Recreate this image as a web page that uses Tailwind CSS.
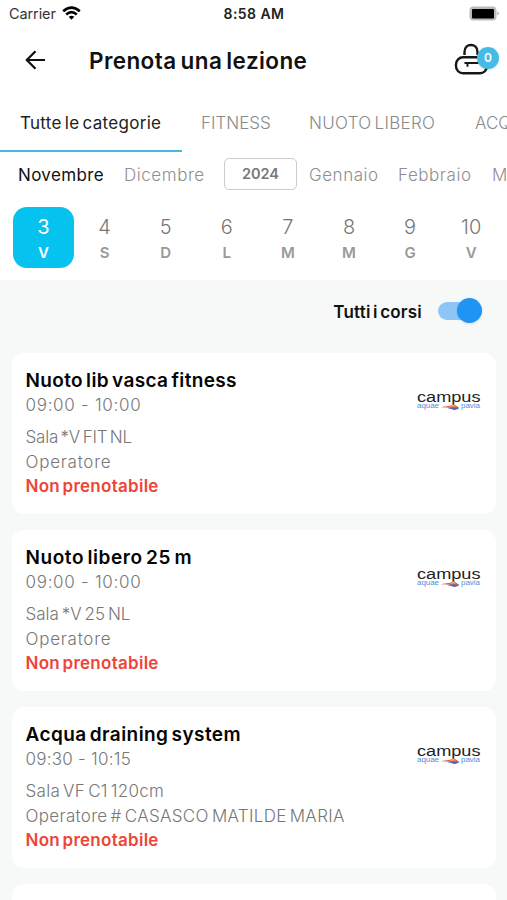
<!DOCTYPE html>
<html lang="it">
<head>
<meta charset="utf-8">
<title>Prenota una lezione</title>
<script src="https://cdn.jsdelivr.net/npm/@tailwindcss/browser@4"></script>
</head>
<body class="bg-[#f7f9f9]">
<svg class="hidden">
  <symbol id="campus" viewBox="0 0 66 24">
    <text x="1" y="12" font-family="Liberation Sans, sans-serif" font-size="15.500" fill="#222" textLength="63.500" lengthAdjust="spacingAndGlyphs">campus</text>
    <text x="1" y="18.300" font-family="Liberation Sans, sans-serif" font-size="6.500" fill="#4a90d9" textLength="22" lengthAdjust="spacingAndGlyphs">aquae</text>
    <text x="45" y="18.300" font-family="Liberation Sans, sans-serif" font-size="6.500" fill="#4a90d9" textLength="19" lengthAdjust="spacingAndGlyphs">pavia</text>
    <path d="M25 17.200C31 15.500 34 16.500 38 14.200L43.500 18Z" fill="#e4573d"/>
    <path d="M33 17L38 14.200L40 16.500Z" fill="#f0a070"/>
    <path d="M31 18Q37 16.500 43.500 18Q39 21 36 19.300Z" fill="#5a62b5"/>
  </symbol>
</svg>
<div class="flex h-[900px] w-[507px] flex-col overflow-hidden whitespace-nowrap bg-[#f7f9f9] font-['Inter',sans-serif]">
  <header class="shrink-0 bg-white">
    <div class="grid h-7 grid-cols-3 items-center pl-[9px] pr-[7px] text-[14.500px] leading-none text-black">
      <div class="flex items-center gap-[6px] text-[#333]"><span class="tracking-[-0.100px]">Carrier</span>
        <svg class="-mt-[2px] h-[14px] w-[19px]" viewBox="0 0 19 14" fill="none" stroke="#000" stroke-width="2.600"><path d="M1.200 5.200Q9.500-2 17.800 5.200"/><path d="M4.200 8.400Q9.500 4 14.800 8.400"/><path d="M6.700 10.700Q9.500 8.600 12.300 10.700L9.500 13.700Z" fill="#000" stroke="none"/></svg>
      </div>
      <div class="-ml-[1px] text-center text-[14px] font-semibold tracking-[0.450px] text-[#222]">8:58 AM</div>
      <svg class="-mt-[2px] h-[15px] w-[31px] justify-self-end" viewBox="0 0 31 15"><rect x=".500" y=".500" width="27" height="14" rx="4" fill="#bbb"/><rect x="3" y="3" width="22" height="9.500" rx="1" fill="#000"/><path d="M28.500 5.500Q31 7.500 28.500 9.500Z" fill="#999"/></svg>
    </div>
    <div class="flex h-[66px] items-center pl-[25px] pr-2">
      <svg class="-mt-[2px] h-5 w-[21px]" viewBox="0 0 21 20" fill="none" stroke="#111" stroke-width="2.200"><path d="M20 10H2M10.500 1.200L1.800 10L10.500 18.800"/></svg>
      <h1 class="ml-[43px] text-[22.500px] font-semibold leading-none tracking-[0.400px] text-[#111] [word-spacing:-2px]">Prenota una lezione</h1>
      <div class="relative ml-auto h-[34px] w-[45px]">
        <svg class="-mt-[1px] h-[34px] w-[36px]" viewBox="0 0 36 34" fill="none" stroke="#171717" stroke-width="2.400"><path d="M10.500 12V9C10.500-.400 23.500-.400 23.500 9V12"/><rect x="2" y="14.300" width="31" height="16" rx="7"/><path d="M10.500 20H24.500M13.500 20V23.800" stroke-width="1.900"/></svg>
        <span class="absolute left-[23px] top-[3px] flex h-[22px] w-[22px] items-center justify-center rounded-full bg-[#46bbe5] text-[12px] font-semibold text-white shadow-sm">0</span>
      </div>
    </div>
    <nav class="flex h-[58px] items-center text-[17px] font-light leading-none text-[#8a8a8a]">
      <div class="flex h-full w-[182px] shrink-0 items-center border-b-[2.500px] border-[#44b7e4] pl-[20px] pt-[2px] font-normal tracking-[0.300px] text-[#222] [word-spacing:-2px]">Tutte le categorie</div>
      <div class="w-[107px] shrink-0 pl-[19px]">FITNESS</div>
      <div class="w-[166px] shrink-0 pl-[20px] tracking-[0.300px] [word-spacing:-2px]">NUOTO LIBERO</div>
      <div class="shrink-0 pl-[20px]">ACQUAGYM</div>
    </nav>
    <div class="flex h-[45px] items-center pt-[2px] text-[17px] font-light leading-none tracking-[0.550px] text-[#8f8f8f]">
      <div class="w-[107px] shrink-0 pl-[18px] font-normal tracking-[0.350px] text-[#111]">Novembre</div>
      <div class="w-[117px] shrink-0 pl-[17px]">Dicembre</div>
      <div class="-mt-[4px] flex h-8 w-[73px] shrink-0 items-center justify-center rounded-[5px] border-[1.500px] border-[#ccc] pt-[2px] text-[14.500px] font-semibold tracking-normal text-[#777]">2024</div>
      <div class="w-[89px] shrink-0 pl-[12px]">Gennaio</div>
      <div class="w-[94px] shrink-0 pl-[12px]">Febbraio</div>
      <div class="shrink-0 pl-[12px]">Marzo</div>
    </div>
    <div class="flex h-[83px] pl-[13px] pt-[10px] text-center leading-none text-[#777]" id="days"></div>
  </header>
  <main class="px-3">
    <div class="flex h-[73px] items-center justify-end pb-[10px] pr-[13px]">
      <span class="pt-[2px] text-[17px] font-semibold leading-none tracking-[0.200px] text-[#111] [word-spacing:-2px]">Tutti i corsi</span>
      <span class="relative -mt-[2px] ml-4 h-[18px] w-[44px] rounded-full bg-[#8cc6f7]"><span class="absolute -top-[4px] right-0 h-[25px] w-[25px] rounded-full bg-[#2094f3] shadow"></span></span>
    </div>
    <div class="flex flex-col gap-[16.500px]" id="lessons"></div>
  </main>
</div>
<script>
  document.getElementById('days').innerHTML = [[3,'V'],[4,'S'],[5,'D'],[6,'L'],[7,'M'],[8,'M'],[9,'G'],[10,'V']].map(([n,d],i) =>
    `<div class="flex h-[61px] w-[61.100px] shrink-0 flex-col items-center rounded-[14px] pt-[10px] ${i ? '' : 'bg-[#05c3ee] text-white'}"><span class="text-[20px] ${i ? 'font-light' : ''}">${n}</span><span class="mt-[8px] text-[15px] font-semibold ${i ? 'text-[#999]' : ''}">${d}</span></div>`).join('');
  const lessons = [
    ['Nuoto lib vasca fitness','09:00 - 10:00','Sala *V FIT NL','Operatore','tracking-[0.350px]','tracking-[0.700px]','tracking-[-0.220px]','tracking-[0.750px]'],
    ['Nuoto libero 25 m','09:00 - 10:00','Sala *V 25 NL','Operatore','tracking-[0.580px]','tracking-[0.700px]','tracking-[0.020px]','tracking-[0.750px]'],
    ['Acqua draining system','09:30 - 10:15','Sala VF C1 120cm','Operatore # CASASCO MATILDE MARIA','tracking-[0.420px]','tracking-[0.250px]','tracking-[0.280px]','tracking-[0.320px]'],
    ['','','','']
  ];
  document.getElementById('lessons').innerHTML = lessons.map(([t,h,s,o,kt,kh,ks,ko]) =>
    `<article class="flex h-[160.500px] w-[484px] shrink-0 justify-between rounded-[12px] bg-white pl-[13.500px] pr-[14px] pt-[15px] text-[17px] font-light text-[#777]">${t ? `<div>
      <h2 class="text-[19px] font-semibold leading-[25px] text-[#050505] [word-spacing:-2px] ${kt}">${t}</h2>
      <p class="leading-[25px] ${kh}">${h}</p>
      <p class="mt-[7px] leading-[24.500px] [word-spacing:-2px] ${ks}">${s}</p>
      <p class="leading-[24.500px] [word-spacing:-2px] ${ko}">${o}</p>
      <p class="font-semibold leading-[24.500px] tracking-[0.270px] text-[#ef4438] [word-spacing:-2px]">Non prenotabile</p></div>
      <svg class="mt-[22px] h-6 w-[66px]"><use href="#campus"/></svg>` : ''}</article>`).join('');
</script>
</body>
</html>
